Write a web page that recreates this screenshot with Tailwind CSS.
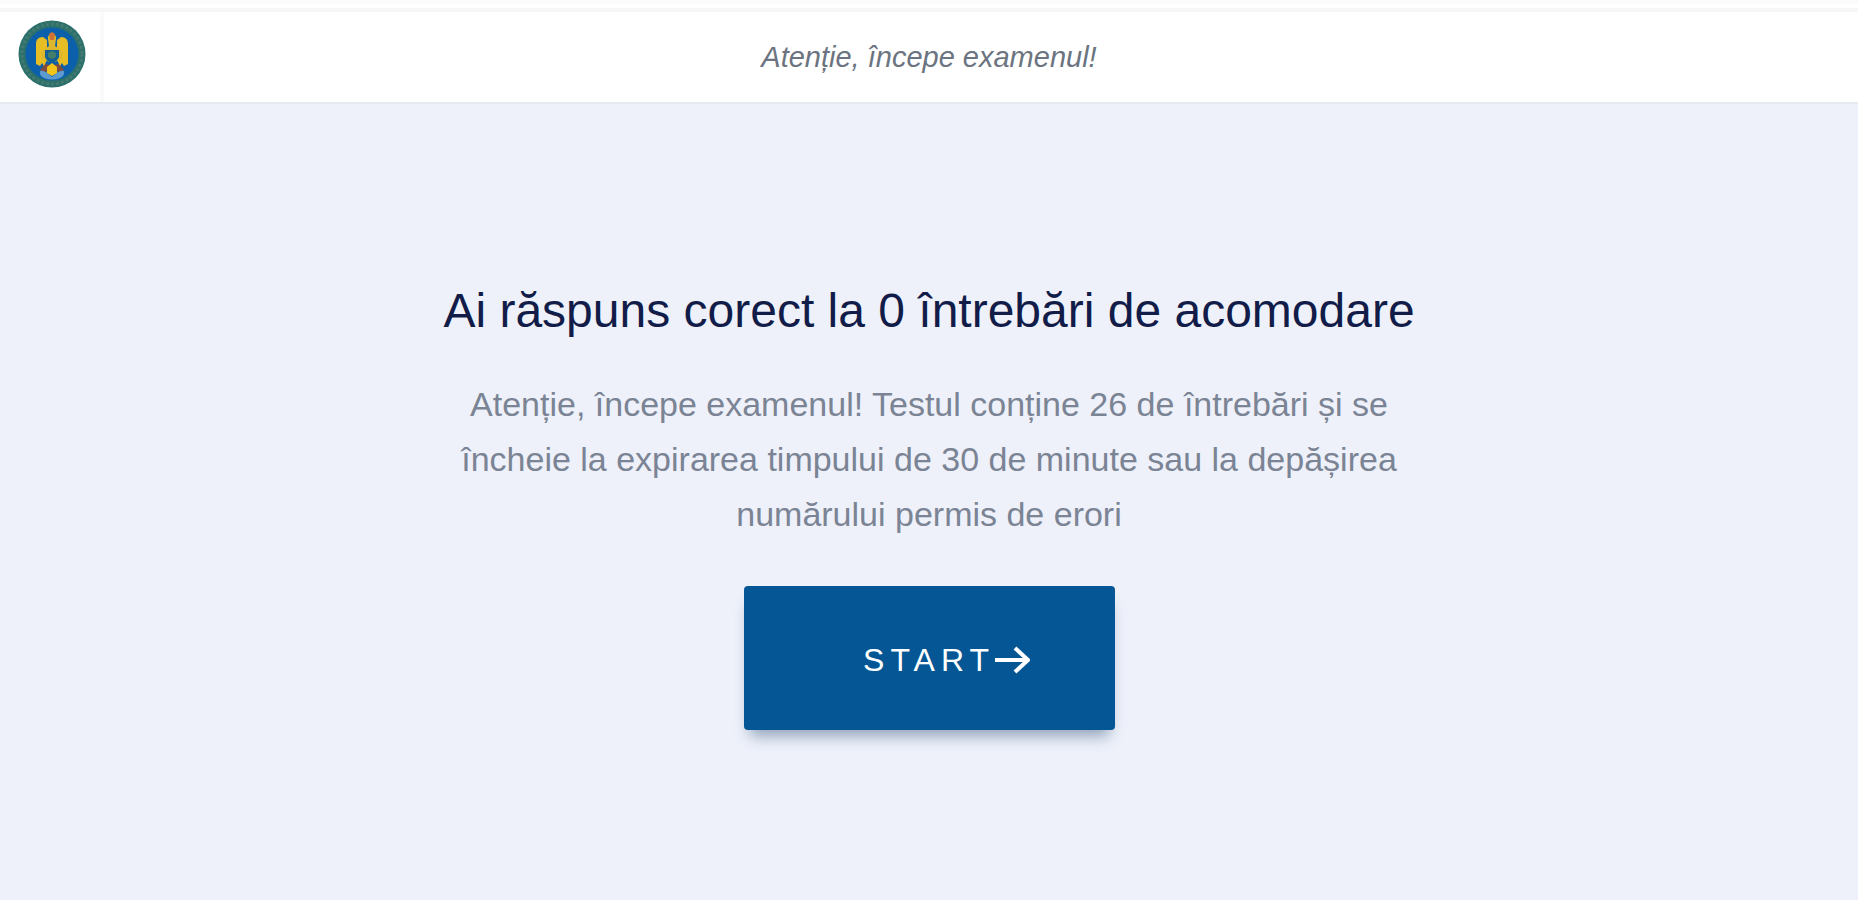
<!DOCTYPE html>
<html lang="ro">
<head>
<meta charset="utf-8">
<meta name="viewport" content="width=device-width, initial-scale=1">
<title>Atenție, începe examenul!</title>
<script src="https://cdn.jsdelivr.net/npm/@tailwindcss/browser@4"></script>
</head>
<body class="flex min-h-screen flex-col bg-[#eef1fa] font-['Liberation_Sans',Arial,sans-serif]">
<div class="h-3 border-y-4 border-t-[#fbfbfb] border-b-[#f6f6f6] bg-white"></div>
<header class="grid h-[92px] grid-cols-[104px_1fr_104px] items-stretch border-b-2 border-[#e6e9ee] bg-white">
  <a href="#" aria-label="Acasă" class="flex items-start justify-center border-r-4 border-[#fafafa] pt-2 pl-1">
    <svg class="h-[68px] w-[68px]" viewBox="0 0 68 68" aria-hidden="true">
      <circle cx="34" cy="34" r="33.5" fill="#2c706c"/>
      <circle cx="34" cy="34" r="30" fill="none" stroke="#43796f" stroke-width="3" stroke-dasharray="3 2"/>
      <circle cx="34" cy="34" r="26.5" fill="#0c60ab"/>
      <path d="M22 51q4-2 6 1l6 5 6-5q2-3 6-1 1 5-4 7-8 3-16 0-5-2-4-7z" fill="#5c9bd0"/>
      <path d="M27 44l-5 6 6 2 4-7zM41 44l5 6-6 2-4-7z" fill="#824c3c"/>
      <path d="M25 17c-5 0-7 3-7 7v20l4 2 2-3 2 3 3-6V20zM43 17c5 0 7 3 7 7v20l-4 2-2-3-2 3-3-6V20z" fill="#e6bd25"/>
      <path d="M30 19q-1-4 4-5 5 1 4 5l-1 7 7 5v7l-7 4h-6l-7-4v-7l7-5z" fill="#dcb62b"/>
      <path d="M31 14l3-2 3 2-1 6h-4z" fill="#cf7335"/>
      <path d="M27 30h14v7q-2 5-7 6-5-1-7-6z" fill="#145f96"/>
      <path d="M30 33l4-2 4 2v4l-4 2-4-2z" fill="#467f68"/>
      <path d="M34 43l5 4v6l-5 3-5-3v-6z" fill="#f3c51b"/>
    </svg>
  </a>
  <p class="flex items-center justify-center text-[29px] leading-8 text-[#6b7480] italic">Atenție, începe examenul!</p>
</header>
<main class="mx-auto flex w-full max-w-[1000px] grow flex-col items-center pt-[177px] text-center">
  <h1 class="text-[48px] leading-[60px] text-[#121c48]">Ai răspuns corect la 0 întrebări de acomodare</h1>
  <p class="mt-9 max-w-[960px] text-[34px] leading-[55px] text-[#7b8494]">Atenție, începe examenul! Testul conține 26 de întrebări și se încheie la expirarea timpului de 30 de minute sau la depășirea numărului permis de erori</p>
  <button type="button" class="mt-11 flex h-[144px] w-[371px] items-center justify-center rounded-sm bg-[#055694] pt-1 pl-9 text-[32px] leading-10 tracking-[6px] text-white shadow-[0_12px_14px_-6px_#8fa2b8]">START<svg class="h-8 w-9" viewBox="0 0 36 32" fill="none" stroke="currentColor" stroke-width="4" stroke-linejoin="round" aria-hidden="true"><path d="M0 16h33M20 4l13 12-13 12"/></svg></button>
</main>
</body>
</html>
